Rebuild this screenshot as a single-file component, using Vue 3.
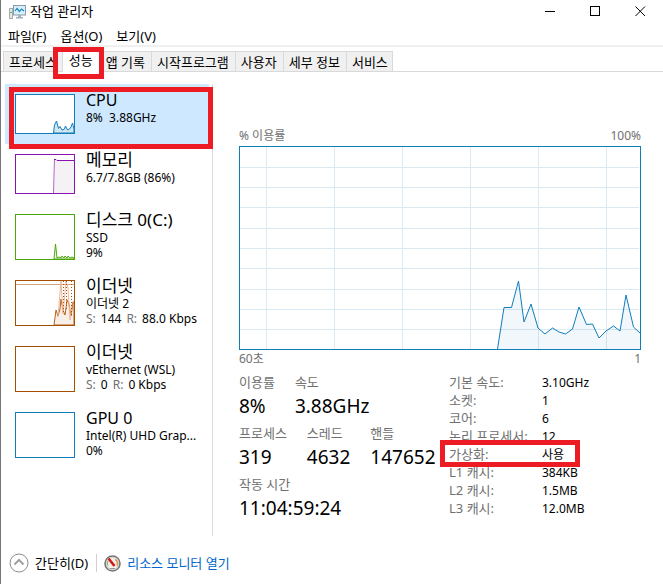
<script setup>
import { ref } from 'vue'

const menus = ['파일(F)', '옵션(O)', '보기(V)']
const tabs = ['프로세스', '성능', '앱 기록', '시작프로그램', '사용자', '세부 정보', '서비스']
const activeTab = ref('성능')
const selected = ref('cpu')

const resources = [
  {
    id: 'cpu', name: 'CPU', latin: true, height: 40, color: '#117dbb', lines: ['8%  3.88GHz'],
    shapes: [
      { d: 'M38.5 39L39.5 31L41.5 27L43.5 34.5L45 32.5L47 36L49 35.5L50.5 32L52.5 36L54.5 35L56 33L57.5 29L59 35V39Z', fill: '#d3e6f2', stroke: '#117dbb' },
    ],
  },
  {
    id: 'memory', name: '메모리', height: 40, color: '#8b12ae', lines: ['6.7/7.8GB (86%)'],
    shapes: [
      { d: 'M39 39L40 6H59V39Z', fill: '#f4f2f4', stroke: 'none' },
      { d: 'M38.5 39L39.5 5', fill: 'none', stroke: '#b566cd' },
      { d: 'M39 5.5H41L42 6.5H59', fill: 'none', stroke: '#8b12ae' },
    ],
  },
  {
    id: 'disk', name: '디스크 0(C:)', height: 46, color: '#4da60c', lines: ['SSD', '9%'],
    shapes: [
      { d: 'M39 45L40.5 30L42 44L44 43L46 44L47 42L49 44L50 42L52 44L53 42L55 44L57 43L59 44V45Z', fill: '#eff7e9', stroke: '#4da60c' },
    ],
  },
  {
    id: 'ethernet', name: '이더넷', height: 46, color: '#a74f01', lines: ['이더넷 2'], send: '144', receive: '88.0 Kbps',
    shapes: [
      { d: 'M1 4.5H59', fill: 'none', stroke: '#d3a780' },
      { d: 'M39 45L41 30L43 36L45 29L46 19L48 30L50 35L52 20L54 24L56 36L58 22H59V45Z', fill: '#f8efe8', stroke: '#b76219' },
      { d: 'M43 37L46 1L48 34L51 1L53 8L55 40L57 24', fill: 'none', stroke: '#efb699' },
      { d: 'M48.5 1V34M51.5 1V31M56.5 1V35', fill: 'none', stroke: '#a74f01', dash: '1 2' },
    ],
  },
  { id: 'wsl', name: '이더넷', height: 46, color: '#a74f01', lines: ['vEthernet (WSL)'], send: '0', receive: '0 Kbps', shapes: [] },
  { id: 'gpu', name: 'GPU 0', latin: true, height: 46, color: '#117dbb', lines: ['Intel(R) UHD Grap...', '0%'], shapes: [] },
]

const gridX = [27, 95, 163, 231, 299, 367]
const gridY = [21, 41, 61, 82, 102, 122, 143, 163, 183]
const usage = [
  [258.5, 203], [265, 161.5], [272.5, 161.5], [279.5, 135], [285, 176], [292, 158], [299, 182],
  [306, 188], [313.5, 182], [320, 186], [326.5, 188], [333.5, 183], [340, 161], [347.5, 178.5],
  [353.5, 178], [360, 192], [367, 185], [374.5, 180], [381, 185], [387, 149], [394.5, 181], [401, 187],
]
const usageLine = usage.map((p) => p.join(',')).join(' ')
const usageArea = `${usageLine} 401,203 258,203`

const statRows = [
  [{ label: '이용률', value: '8%' }, { label: '속도', value: '3.88GHz' }],
  [{ label: '프로세스', value: '319' }, { label: '스레드', value: '4632' }, { label: '핸들', value: '147652' }],
  [{ label: '작동 시간', value: '11:04:59:24' }],
]
const details = [
  { label: '기본 속도:', value: '3.10GHz' },
  { label: '소켓:', value: '1' },
  { label: '코어:', value: '6' },
  { label: '논리 프로세서:', value: '12' },
  { label: '가상화:', value: '사용', marked: true },
  { label: 'L1 캐시:', value: '384KB' },
  { label: 'L2 캐시:', value: '1.5MB' },
  { label: 'L3 캐시:', value: '12.0MB' },
]
</script>

<template>
  <div class="window">
    <header class="titlebar">
      <svg class="app-icon" width="17" height="16" viewBox="0 0 17 16" aria-hidden="true">
        <rect x="0.5" y="4.5" width="3" height="10" fill="#e3e6e8" stroke="#a5acb1" />
        <path d="M1 8.5H3" stroke="#5cb85c" />
        <rect x="4.5" y="1.5" width="12" height="9.5" fill="#d8f0fb" stroke="#8a9aa5" />
        <path d="M6 7L8 4.5L10.5 7.5L12.5 5L15 7" fill="none" stroke="#1683bd" stroke-width="1.2" />
        <path d="M9 11H12V13H14V14.5H7V13H9Z" fill="#a5b0b8" />
      </svg>
      <h1>작업 관리자</h1>
      <div class="controls">
        <button type="button" aria-label="최소화">
          <svg width="11" height="11" viewBox="0 0 11 11"><path d="M0 5.5H10" stroke="#000" /></svg>
        </button>
        <button type="button" aria-label="최대화">
          <svg width="11" height="11" viewBox="0 0 11 11"><rect x="0.5" y="0.5" width="9" height="9" fill="none" stroke="#000" /></svg>
        </button>
        <button type="button" aria-label="닫기">
          <svg width="11" height="11" viewBox="0 0 11 11"><path d="M0.5 0.5L10 10M10 0.5L0.5 10" stroke="#000" /></svg>
        </button>
      </div>
    </header>

    <nav class="menubar">
      <button v-for="menu in menus" :key="menu" type="button">{{ menu }}</button>
    </nav>

    <div class="tabs" role="tablist">
      <button
        v-for="tab in tabs"
        :key="tab"
        type="button"
        role="tab"
        class="tab"
        :class="{ active: tab === activeTab }"
        :aria-selected="tab === activeTab"
        @click="activeTab = tab"
      >
        {{ tab }}<span v-if="tab === '성능'" class="mark mark-tab"></span>
      </button>
    </div>

    <main class="content">
      <aside class="sidebar">
        <button
          v-for="item in resources"
          :key="item.id"
          type="button"
          class="resource"
          :class="{ selected: item.id === selected }"
          @click="selected = item.id"
        >
          <svg class="thumb" width="60" :height="item.height" :viewBox="`0 0 60 ${item.height}`">
            <rect x="0.5" y="0.5" width="59" :height="item.height - 1" fill="#fff" />
            <path
              v-for="(shape, i) in item.shapes"
              :key="i"
              :d="shape.d"
              :fill="shape.fill"
              :stroke="shape.stroke"
              :stroke-dasharray="shape.dash"
            />
            <rect x="0.5" y="0.5" width="59" :height="item.height - 1" fill="none" :stroke="item.color" />
          </svg>
          <span class="info">
            <span class="name" :class="{ latin: item.latin }">{{ item.name }}</span>
            <span v-for="line in item.lines" :key="line" class="line">{{ line }}</span>
            <span v-if="item.send" class="line traffic">
              <i>S:</i><span>{{ item.send }}</span><i>R:</i><span>{{ item.receive }}</span>
            </span>
          </span>
          <span v-if="item.id === 'cpu'" class="mark mark-cpu"></span>
        </button>
      </aside>

      <section class="panel">
        <div class="caption"><span>% 이용률</span><span>100%</span></div>
        <svg class="chart" viewBox="0 0 402 204" preserveAspectRatio="none">
          <path v-for="x in gridX" :key="`x${x}`" :d="`M${x + 0.5} 1V203`" stroke="#d9eaf4" />
          <path v-for="y in gridY" :key="`y${y}`" :d="`M1 ${y + 0.5}H400`" stroke="#d9eaf4" />
          <polygon :points="usageArea" fill="#117dbb" fill-opacity="0.06" />
          <polyline :points="usageLine" fill="none" stroke="#117dbb" stroke-width="1" />
          <rect x="0.5" y="0.5" width="401" height="203" fill="none" stroke="#117dbb" />
        </svg>
        <div class="caption"><span>60초</span><span>1</span></div>

        <div class="figures">
          <div class="stats">
            <dl v-for="(row, i) in statRows" :key="i" class="stat-row">
              <div v-for="stat in row" :key="stat.label">
                <dt>{{ stat.label }}</dt>
                <dd>{{ stat.value }}</dd>
              </div>
            </dl>
          </div>
          <dl class="details">
            <div v-for="detail in details" :key="detail.label" class="detail">
              <dt>{{ detail.label }}</dt>
              <dd>{{ detail.value }}</dd>
              <span v-if="detail.marked" class="mark mark-detail"></span>
            </div>
          </dl>
        </div>
      </section>
    </main>

    <footer class="footer">
      <button type="button" class="fewer">
        <svg width="20" height="20" viewBox="0 0 20 20" aria-hidden="true">
          <circle cx="10" cy="10" r="9" fill="#fff" stroke="#8c8c8c" />
          <path d="M5.5 11.5L10 7L14.5 11.5" fill="none" stroke="#a0a0a0" stroke-width="2" />
        </svg>
        간단히(D)
      </button>
      <a href="#" class="monitor">
        <svg width="17" height="17" viewBox="0 0 17 17" aria-hidden="true">
          <circle cx="8.5" cy="8.5" r="7.5" fill="#f6f3ec" stroke="#777" stroke-width="1.6" />
          <circle cx="8.5" cy="8.5" r="6" fill="none" stroke="#cfcac0" />
          <path d="M4 10.5A5 5 0 0 1 4 6" fill="none" stroke="#7da37a" />
          <path d="M11 4.5A5 5 0 0 1 13 10.5" fill="none" stroke="#e58b4a" stroke-width="1.4" />
          <path d="M4.5 3.5L10.5 11" stroke="#d01818" stroke-width="2.6" />
          <path d="M6 13.5H11" stroke="#999" />
        </svg>
        리소스 모니터 열기
      </a>
    </footer>
  </div>
</template>

<style>
body {
  margin: 0;
  background: #fff;
}
</style>

<style scoped>
.window {
  box-sizing: border-box;
  min-height: 100vh;
  display: flex;
  flex-direction: column;
  border-left: 1px solid #777;
  background: #fff;
  color: #000;
  font: 13px/18px "Noto Sans", "Noto Sans CJK KR", sans-serif;
}

button {
  margin: 0;
  padding: 0;
  border: 0;
  background: none;
  color: inherit;
  font: inherit;
  text-align: left;
  white-space: nowrap;
}

dl,
dd {
  margin: 0;
}

.titlebar {
  display: flex;
  align-items: center;
  height: 22px;
  padding-left: 8px;
}

.titlebar h1 {
  flex: 1;
  margin: 0 0 0 4px;
  font-size: 13px;
  font-weight: 400;
}

.app-icon {
  margin-top: 2px;
}

.controls {
  display: flex;
}

.controls button {
  display: flex;
  align-items: center;
  justify-content: center;
  width: 45px;
  height: 22px;
}

.menubar {
  display: flex;
  gap: 14px;
  padding: 5px 7px 0;
  border-bottom: 2px solid #f0f0f0;
}

.tabs {
  display: flex;
  align-items: flex-end;
  height: 24px;
  padding-left: 2px;
  border-bottom: 1px solid #d9d9d9;
}

.tab {
  position: relative;
  box-sizing: border-box;
  height: 20px;
  padding: 0 6px 0 5px;
  border: solid #d9d9d9;
  border-width: 1px 0 0 1px;
  background: #f0f0f0;
}

.tab:last-child {
  padding-right: 4px;
  border-right-width: 1px;
}

.tab.active {
  height: 23px;
  margin: 0 0 -1px -1px;
  padding: 0 7px 2px 6px;
  background: #fff;
}

.mark {
  position: absolute;
  z-index: 1;
  box-sizing: border-box;
  border: 5px solid #ed1c24;
  pointer-events: none;
}

.mark-tab {
  inset: -3px -4px -7px -10px;
}

.content {
  flex: 1;
  display: flex;
  padding: 12px 22px 0 4px;
}

.sidebar {
  flex: none;
  box-sizing: border-box;
  width: 208px;
  padding-right: 3px;
  border-right: 1px solid #d9d9d9;
}

.resource {
  position: relative;
  display: flex;
  align-items: flex-start;
  gap: 11px;
  width: 100%;
  padding: 10px;
}

.resource.selected {
  background: #cde8ff;
}

.mark-cpu {
  inset: 3px -4px -5px 4px;
}

.thumb {
  flex: none;
  display: block;
}

.info {
  display: flex;
  flex-direction: column;
  height: 40px;
  margin-top: -4px;
}

.name {
  flex: none;
  font-size: 17px;
  line-height: 20px;
}

.name.latin {
  font-size: 16px;
}

.line {
  flex: none;
  font-size: 12px;
  line-height: 15px;
  white-space: pre;
}

.traffic {
  display: flex;
  gap: 5px;
}

.traffic i {
  color: #707070;
  font-style: normal;
}

.panel {
  flex: 1;
  min-width: 0;
  padding: 43px 0 0 26px;
}

.caption {
  display: flex;
  justify-content: space-between;
  color: #707070;
  font-size: 12px;
}

.chart {
  display: block;
  width: 100%;
  height: 204px;
  margin-top: 1px;
}

.figures {
  display: flex;
  padding-top: 4px;
}

.stats {
  flex: none;
  width: 210px;
}

.stat-row {
  display: flex;
  gap: 20px;
  padding-bottom: 3px;
  white-space: nowrap;
}

.stat-row dt {
  color: #707070;
  line-height: 20px;
}

.stat-row dd {
  font-size: 19px;
  line-height: 28px;
}

.details {
  padding-top: 1px;
}

.detail {
  position: relative;
  display: grid;
  grid-template-columns: 93px auto;
  align-items: baseline;
  height: 18px;
  white-space: nowrap;
}

.detail dt {
  color: #707070;
}

.detail dd {
  font-size: 12px;
}

.mark-detail {
  inset: -5px 9px -4px -9px;
}

.footer {
  display: flex;
  align-items: center;
  padding: 17px 8px 11px;
}

.fewer,
.monitor {
  display: flex;
  align-items: center;
  gap: 6px;
}

.fewer {
  padding-right: 8px;
}

.monitor {
  padding-left: 7px;
  border-left: 1px solid #d0d0d0;
  color: #0066cc;
  text-decoration: none;
}
</style>
